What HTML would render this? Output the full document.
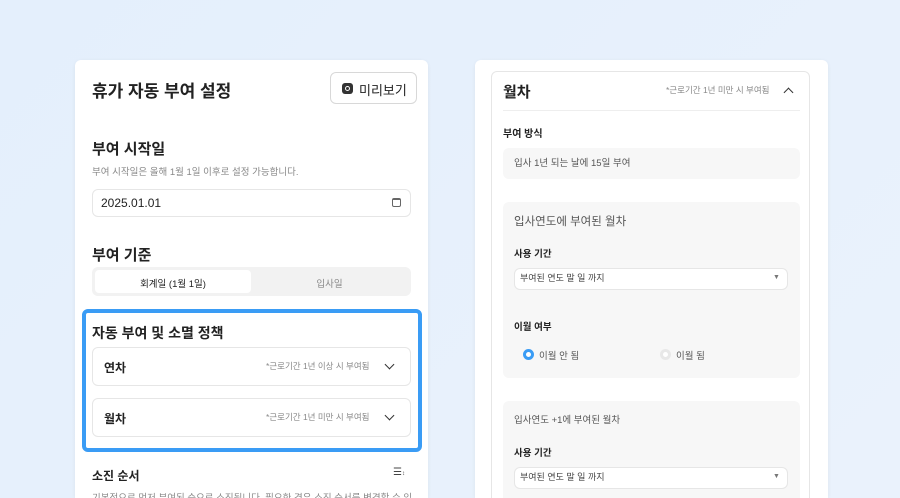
<!DOCTYPE html>
<html><head><meta charset="utf-8"><style>
*{margin:0;padding:0;box-sizing:border-box}
html,body{width:900px;height:498px;overflow:hidden}
body{background:linear-gradient(135deg,#e4effc,#eaf2fc);font-family:"Liberation Sans","Noto Sans CJK KR",sans-serif;color:#222;position:relative}
.a{position:absolute;white-space:nowrap}
.card{position:absolute;background:#fff;border-radius:6px;box-shadow:0 1px 4px rgba(0,0,0,.06)}
.b{font-weight:bold}
.g{color:#888}
.box{position:absolute;border:1px solid #e6e6e6;border-radius:6px;background:#fff}
.gray{position:absolute;background:#f7f7f7;border-radius:6px}
.chev{position:absolute;width:7px;height:7px;border-right:1.6px solid #333;border-bottom:1.6px solid #333;transform:rotate(45deg)}
</style></head><body>
<div class="card" style="left:75px;top:60px;width:353px;height:438px;border-radius:6px 6px 0 0"></div>
<div class="a b" style="left:92px;top:77px;font-size:17px">휴가 자동 부여 설정</div>
<div class="box" style="left:330px;top:72px;width:87px;height:32px;border-color:#d8d8d8"></div>
<div class="a" style="left:342px;top:83px;width:11px;height:11px;background:#333;border-radius:3px"><div style="position:absolute;left:3px;top:3px;width:5px;height:5px;border:1px solid #fff;border-radius:50%"></div></div>
<div class="a" style="left:359px;top:80px;font-size:13px">미리보기</div>
<div class="a b" style="left:92px;top:138px;font-size:15px">부여 시작일</div>
<div class="a g" style="left:92px;top:164px;font-size:9.5px">부여 시작일은 올해 1월 1일 이후로 설정 가능합니다.</div>
<div class="box" style="left:92px;top:189px;width:319px;height:28px"></div>
<div class="a" style="left:101px;top:196px;font-size:12px">2025.01.01</div>
<div class="a" style="left:392px;top:198px;width:9px;height:9px;border:1.2px solid #666;border-radius:2px;border-top-width:2.5px"></div>
<div class="a b" style="left:92px;top:244px;font-size:15px">부여 기준</div>
<div class="gray" style="left:92px;top:267px;width:319px;height:29px;background:#f2f2f2"></div>
<div class="a" style="left:95px;top:270px;width:156px;height:23px;background:#fff;border-radius:4px"></div>
<div class="a" style="left:95px;top:276px;width:156px;text-align:center;font-size:9.5px">회계일 (1월 1일)</div>
<div class="a g" style="left:251px;top:276px;width:157px;text-align:center;font-size:9.5px">입사일</div>
<div class="a" style="left:82px;top:309px;width:340px;height:143px;border:4px solid #3a9cf5;border-radius:6px"></div>
<div class="a b" style="left:92px;top:323px;font-size:14px">자동 부여 및 소멸 정책</div>
<div class="box" style="left:92px;top:347px;width:319px;height:39px"></div>
<div class="a b" style="left:104px;top:359px;font-size:12px">연차</div>
<div class="a g" style="left:266px;top:360px;font-size:8.5px">*근로기간 1년 이상 시 부여됨</div>
<div class="chev" style="left:386px;top:361px"></div>
<div class="box" style="left:92px;top:398px;width:319px;height:39px"></div>
<div class="a b" style="left:104px;top:410px;font-size:12px">월차</div>
<div class="a g" style="left:266px;top:411px;font-size:8.5px">*근로기간 1년 미만 시 부여됨</div>
<div class="chev" style="left:386px;top:412px"></div>
<div class="a b" style="left:92px;top:467px;font-size:12px">소진 순서</div>
<div class="a" style="left:393px;top:467px;font-size:10px;color:#444">☰<span style="font-size:6px">↕</span></div>
<div class="a g" style="left:92px;top:490px;font-size:9.5px">기본적으로 먼저 부여된 순으로 소진됩니다. 필요한 경우 소진 순서를 변경할 수 있</div>

<div class="card" style="left:475px;top:60px;width:353px;height:438px;border-radius:6px 6px 0 0"></div>
<div class="box" style="left:491px;top:71px;width:319px;height:440px"></div>
<div class="a b" style="left:503px;top:81px;font-size:15px">월차</div>
<div class="a g" style="left:666px;top:84px;font-size:8.5px">*근로기간 1년 미만 시 부여됨</div>
<div class="chev" style="left:785px;top:89px;transform:rotate(225deg)"></div>
<div class="a" style="left:503px;top:110px;width:297px;height:1px;background:#eee"></div>
<div class="a b" style="left:503px;top:125px;font-size:10px">부여 방식</div>
<div class="gray" style="left:503px;top:148px;width:297px;height:31px"></div>
<div class="a" style="left:514px;top:155px;font-size:9.5px;color:#555">입사 1년 되는 날에 15일 부여</div>
<div class="gray" style="left:503px;top:202px;width:297px;height:176px"></div>
<div class="a" style="left:514px;top:213px;font-size:11.5px;color:#555">입사연도에 부여된 월차</div>
<div class="a b" style="left:514px;top:246px;font-size:9.5px">사용 기간</div>
<div class="box" style="left:514px;top:268px;width:274px;height:22px"></div>
<div class="a" style="left:520px;top:271px;font-size:9px;color:#444">부여된 연도 말 일 까지</div>
<div class="a" style="left:773px;top:274px;font-size:7px;color:#777">▼</div>
<div class="a b" style="left:514px;top:319px;font-size:9.5px">이월 여부</div>
<div class="a" style="left:523px;top:349px;width:11px;height:11px;border-radius:50%;border:3.5px solid #3a9cf5;background:#fff"></div>
<div class="a" style="left:539px;top:348px;font-size:9.5px;color:#555">이월 안 됨</div>
<div class="a" style="left:660px;top:349px;width:11px;height:11px;border-radius:50%;border:3px solid #e8e8e8;background:#fff"></div>
<div class="a" style="left:676px;top:348px;font-size:9.5px;color:#555">이월 됨</div>
<div class="gray" style="left:503px;top:401px;width:297px;height:110px"></div>
<div class="a" style="left:514px;top:412px;font-size:9.5px;color:#555">입사연도 +1에 부여된 월차</div>
<div class="a b" style="left:514px;top:445px;font-size:9.5px">사용 기간</div>
<div class="box" style="left:514px;top:467px;width:274px;height:22px"></div>
<div class="a" style="left:520px;top:470px;font-size:9px;color:#444">부여된 연도 말 일 까지</div>
<div class="a" style="left:773px;top:473px;font-size:7px;color:#777">▼</div>
</body></html>
